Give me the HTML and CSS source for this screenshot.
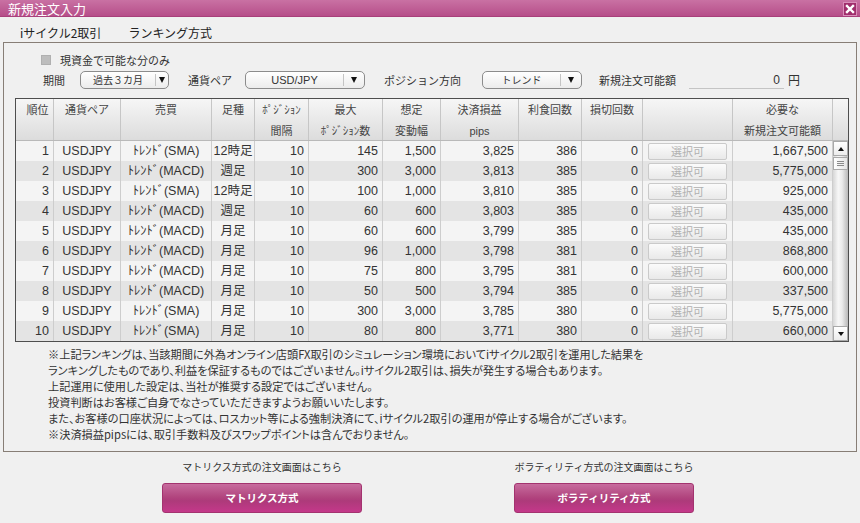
FILE: index.html
```html
<!DOCTYPE html>
<html lang="ja">
<head>
<meta charset="utf-8">
<title>新規注文入力</title>
<link rel="stylesheet" href="styles.css">
</head>
<body>
<div class="titlebar">
  <span class="title">新規注文入力</span>
  <span class="close">
    <svg width="14" height="14" viewBox="0 0 14 14"><rect x="0.5" y="0.5" width="13" height="13" fill="#a02d6c" stroke="#d98fb9"/><path d="M4 4 L10 10 M10 4 L4 10" stroke="#fff" stroke-width="2.4" stroke-linecap="square"/></svg>
  </span>
</div>
<div class="tabs">
  <span class="tab">iサイクル2取引</span>
  <span class="tab">ランキング方式</span>
</div>
<div class="panel">
  <div class="opt-row">
    <span class="checkbox"></span>
    <span class="opt-label">現資金で可能な分のみ</span>
  </div>
  <div class="filter-row">
    <span class="lbl lbl-period">期間</span>
    <div class="dd dd-period"><span class="dd-text">過去３カ月</span><span class="dd-sep"></span><span class="dd-arrow narrow"><i></i></span></div>
    <span class="lbl lbl-pair">通貨ペア</span>
    <div class="dd dd-pair"><span class="dd-text latin">USD/JPY</span><span class="dd-sep"></span><span class="dd-arrow"><i></i></span></div>
    <span class="lbl lbl-dir">ポジション方向</span>
    <div class="dd dd-dir"><span class="dd-text">トレンド</span><span class="dd-sep"></span><span class="dd-arrow"><i></i></span></div>
    <span class="lbl lbl-avail">新規注文可能額</span>
    <span class="field">0</span>
    <span class="yen">円</span>
  </div>
  <div class="grid">
    <div class="head">
      <div class="hc">順位</div>
      <div class="hc">通貨ペア</div>
      <div class="hc">売買</div>
      <div class="hc">足種</div>
      <div class="hc">ﾎﾟｼﾞｼｮﾝ<br>間隔</div>
      <div class="hc">最大<br>ﾎﾟｼﾞｼｮﾝ数</div>
      <div class="hc">想定<br>変動幅</div>
      <div class="hc">決済損益<br><span class="latin">pips</span></div>
      <div class="hc">利食回数</div>
      <div class="hc">損切回数</div>
      <div class="hc"></div>
      <div class="hc">必要な<br>新規注文可能額</div>
      <div class="hc last"></div>
    </div>
    <div class="body">
      <div class="rows">
        <div class="row"><div class="c r">1</div><div class="c m">USDJPY</div><div class="c m">ﾄﾚﾝﾄﾞ(SMA)</div><div class="c m">12時足</div><div class="c r">10</div><div class="c r">145</div><div class="c r">1,500</div><div class="c r">3,825</div><div class="c r">386</div><div class="c r">0</div><div class="c b"><span class="sel">選択可</span></div><div class="c r">1,667,500</div></div>
        <div class="row"><div class="c r">2</div><div class="c m">USDJPY</div><div class="c m">ﾄﾚﾝﾄﾞ(MACD)</div><div class="c m">週足</div><div class="c r">10</div><div class="c r">300</div><div class="c r">3,000</div><div class="c r">3,813</div><div class="c r">385</div><div class="c r">0</div><div class="c b"><span class="sel">選択可</span></div><div class="c r">5,775,000</div></div>
        <div class="row"><div class="c r">3</div><div class="c m">USDJPY</div><div class="c m">ﾄﾚﾝﾄﾞ(SMA)</div><div class="c m">12時足</div><div class="c r">10</div><div class="c r">100</div><div class="c r">1,000</div><div class="c r">3,810</div><div class="c r">385</div><div class="c r">0</div><div class="c b"><span class="sel">選択可</span></div><div class="c r">925,000</div></div>
        <div class="row"><div class="c r">4</div><div class="c m">USDJPY</div><div class="c m">ﾄﾚﾝﾄﾞ(MACD)</div><div class="c m">週足</div><div class="c r">10</div><div class="c r">60</div><div class="c r">600</div><div class="c r">3,803</div><div class="c r">385</div><div class="c r">0</div><div class="c b"><span class="sel">選択可</span></div><div class="c r">435,000</div></div>
        <div class="row"><div class="c r">5</div><div class="c m">USDJPY</div><div class="c m">ﾄﾚﾝﾄﾞ(MACD)</div><div class="c m">月足</div><div class="c r">10</div><div class="c r">60</div><div class="c r">600</div><div class="c r">3,799</div><div class="c r">385</div><div class="c r">0</div><div class="c b"><span class="sel">選択可</span></div><div class="c r">435,000</div></div>
        <div class="row"><div class="c r">6</div><div class="c m">USDJPY</div><div class="c m">ﾄﾚﾝﾄﾞ(MACD)</div><div class="c m">月足</div><div class="c r">10</div><div class="c r">96</div><div class="c r">1,000</div><div class="c r">3,798</div><div class="c r">381</div><div class="c r">0</div><div class="c b"><span class="sel">選択可</span></div><div class="c r">868,800</div></div>
        <div class="row"><div class="c r">7</div><div class="c m">USDJPY</div><div class="c m">ﾄﾚﾝﾄﾞ(MACD)</div><div class="c m">月足</div><div class="c r">10</div><div class="c r">75</div><div class="c r">800</div><div class="c r">3,795</div><div class="c r">381</div><div class="c r">0</div><div class="c b"><span class="sel">選択可</span></div><div class="c r">600,000</div></div>
        <div class="row"><div class="c r">8</div><div class="c m">USDJPY</div><div class="c m">ﾄﾚﾝﾄﾞ(MACD)</div><div class="c m">月足</div><div class="c r">10</div><div class="c r">50</div><div class="c r">500</div><div class="c r">3,794</div><div class="c r">385</div><div class="c r">0</div><div class="c b"><span class="sel">選択可</span></div><div class="c r">337,500</div></div>
        <div class="row"><div class="c r">9</div><div class="c m">USDJPY</div><div class="c m">ﾄﾚﾝﾄﾞ(SMA)</div><div class="c m">月足</div><div class="c r">10</div><div class="c r">300</div><div class="c r">3,000</div><div class="c r">3,785</div><div class="c r">380</div><div class="c r">0</div><div class="c b"><span class="sel">選択可</span></div><div class="c r">5,775,000</div></div>
        <div class="row"><div class="c r">10</div><div class="c m">USDJPY</div><div class="c m">ﾄﾚﾝﾄﾞ(SMA)</div><div class="c m">月足</div><div class="c r">10</div><div class="c r">80</div><div class="c r">800</div><div class="c r">3,771</div><div class="c r">380</div><div class="c r">0</div><div class="c b"><span class="sel">選択可</span></div><div class="c r">660,000</div></div>
      </div>
      <div class="scrollbar">
        <span class="sb-btn"><i class="up"></i></span>
        <span class="sb-thumb"><i></i><i></i><i></i></span>
        <span class="sb-track"></span>
        <span class="sb-btn"><i class="down"></i></span>
      </div>
    </div>
  </div>
  <div class="notes">
    <p>※上記ランキングは、当該期間に外為オンライン店頭FX取引のシミュレーション環境においてiサイクル2取引を運用した結果を</p>
    <p>ランキングしたものであり、利益を保証するものではございません。iサイクル2取引は、損失が発生する場合もあります。</p>
    <p>上記運用に使用した設定は、当社が推奨する設定ではございません。</p>
    <p>投資判断はお客様ご自身でなさっていただきますようお願いいたします。</p>
    <p>また、お客様の口座状況によっては、ロスカット等による強制決済にて、iサイクル2取引の運用が停止する場合がございます。</p>
    <p>※決済損益pipsには、取引手数料及びスワップポイントは含んでおりません。</p>
  </div>
</div>
<div class="bottom">
  <div class="action act-matrix">
    <div class="caption">マトリクス方式の注文画面はこちら</div>
    <div class="pbtn">マトリクス方式</div>
  </div>
  <div class="action act-vol">
    <div class="caption">ボラティリティ方式の注文画面はこちら</div>
    <div class="pbtn">ボラティリティ方式</div>
  </div>
</div>
</body>
</html>
```
FILE: styles.css
```css
* { box-sizing: border-box; }
html, body { margin: 0; padding: 0; }
body {
  width: 860px;
  height: 523px;
  overflow: hidden;
  background: #f0f0f0;
  color: #333;
  font-family: "Noto Sans CJK JP", "Liberation Sans", sans-serif;
  font-size: 11px;
}
.latin { font-family: "Liberation Sans", "Noto Sans CJK JP", sans-serif; }

.titlebar {
  height: 17px;
  background: linear-gradient(#c971a3, #b54c88);
  box-shadow: inset 0 -1px 0 #a8407b;
  display: flex;
  align-items: center;
  justify-content: space-between;
  padding: 0 3px 0 8px;
  color: #fff;
}
.title { font-size: 13px; line-height: 17px; }
.close { display: flex; width: 14px; height: 14px; }

.tabs {
  height: 25px;
  padding: 7px 0 0 20px;
  display: flex;
  gap: 27px;
  font-size: 12px;
  line-height: 17px;
  color: #222;
}

.panel {
  margin: 0 3px;
  height: 410px;
  border: 1px solid #877e76;
}

.opt-row {
  margin-top: 10px;
  height: 14px;
  padding-left: 37px;
  display: flex;
  align-items: center;
}
.checkbox {
  width: 10px;
  height: 10px;
  background: #bdbdbd;
  border: 1px solid #b0b0b0;
  margin-right: 9px;
}
.opt-label { line-height: 14px; }

.filter-row {
  margin-top: 4px;
  height: 18px;
  padding-left: 39px;
  display: flex;
  align-items: center;
}
.lbl { display: block; line-height: 18px; white-space: nowrap; }
.lbl-period { width: 37px; }
.lbl-pair { width: 57px; }
.lbl-dir { width: 98px; }
.lbl-avail { width: 90px; }

.dd {
  height: 18px;
  border: 1px solid #8c8c8c;
  border-radius: 5px;
  background: linear-gradient(#ffffff, #ececec);
  display: flex;
  align-items: center;
  margin-right: 19px;
}
.dd-period { width: 89px; }
.dd-pair { width: 120px; }
.dd-dir { width: 100px; margin-right: 17px; }
.dd-text { flex: 1; text-align: center; font-size: 10px; line-height: 16px; color: #333; }
.dd-text.latin { font-size: 11px; }
.dd-sep { width: 1px; height: 12px; background: #c4c4c4; }
.dd-arrow { width: 20px; display: flex; justify-content: center; align-items: center; }
.dd-arrow.narrow { width: 12px; }
.dd-arrow i {
  display: block;
  width: 0; height: 0;
  border-left: 3.5px solid transparent;
  border-right: 3.5px solid transparent;
  border-top: 6px solid #111;
}
.field {
  width: 95px;
  height: 17px;
  border-bottom: 1px solid #c4c4c4;
  text-align: right;
  padding-right: 4px;
  line-height: 17px;
  font-family: "Liberation Sans", sans-serif;
  font-size: 12px;
}
.yen { margin-left: 4px; font-size: 12px; line-height: 18px; }

/* grid */
.grid {
  margin: 9px 0 0 11px;
  width: 834px;
  border: 1px solid #4e4e4e;
  background: #f4f4f4;
}
.head, .row {
  display: grid;
  grid-template-columns: 38px 67px 91px 43px 54px 74px 58px 78px 63px 61px 90px 100px;
}
.head {
  grid-template-columns: 38px 67px 91px 43px 54px 74px 58px 78px 63px 61px 90px 100px 15px;
  height: 42px;
  background: linear-gradient(#f6f6f6, #dcdcdc);
  border-bottom: 1px solid #b9b9b9;
}
.hc {
  border-right: 1px solid #c6c6c6;
  text-align: center;
  font-size: 11px;
  line-height: 21px;
  color: #444;
  white-space: nowrap;
  overflow: hidden;
}
.hc:first-child { padding-left: 6px; }
.hc.last { border-right: 0; }

.body { display: flex; }
.rows { width: 817px; }
.row {
  height: 20px;
  background: #f4f4f4;
  font-family: "Liberation Sans", "Noto Sans CJK JP", sans-serif;
  font-size: 12.5px;
  color: #333;
}
.row:nth-child(even) { background: #e4e4e4; }
.c {
  border-right: 1px solid #cdcdcd;
  line-height: 20px;
  white-space: nowrap;
  overflow: hidden;
}
.c.r { text-align: right; padding-right: 4px; }
.c.m { text-align: center; }
.c.b { display: flex; align-items: center; padding-left: 5px; }
.sel {
  display: block;
  width: 79px;
  height: 17px;
  border: 1px solid #cacaca;
  border-radius: 2px;
  background: linear-gradient(#fbfbfb, #e9e9e9);
  color: #b0b0b0;
  font-family: "Noto Sans CJK JP", sans-serif;
  font-size: 11px;
  line-height: 15px;
  text-align: center;
}

.scrollbar {
  width: 15px;
  height: 200px;
  display: flex;
  flex-direction: column;
  background: linear-gradient(to right, #d6d6d6, #f7f7f7 35%, #ececec 60%, #b9b9b9);
}
.sb-btn {
  height: 15px;
  border: 1px solid #a9a9a9;
  background: linear-gradient(#ffffff, #ececec);
  display: flex;
  align-items: center;
  justify-content: center;
}
.sb-btn i { display: block; width: 0; height: 0; border-left: 3px solid transparent; border-right: 3px solid transparent; }
.sb-btn i.up { border-bottom: 4px solid #111; }
.sb-btn i.down { border-top: 4px solid #111; }
.sb-thumb {
  height: 13px;
  margin-top: 1px;
  border: 1px solid #a9a9a9;
  background: linear-gradient(to right, #ffffff, #e4e4e4);
  display: flex;
  flex-direction: column;
  justify-content: center;
  align-items: center;
  gap: 1px;
}
.sb-thumb i { display: block; width: 7px; height: 1px; background: #8a8a8a; }
.sb-track { flex: 1; }

.notes {
  margin-top: 4px;
  padding-left: 44px;
  font-size: 11.2px;
  line-height: 16px;
  color: #333;
  font-feature-settings: "palt";
}
.notes p { margin: 0; white-space: nowrap; }

.bottom {
  display: flex;
  padding: 7px 0 0 162px;
  gap: 152px;
}
.action { display: flex; flex-direction: column; align-items: center; }
.act-matrix { width: 200px; }
.act-vol { width: 180px; }
.caption { font-size: 10px; line-height: 16px; color: #333; white-space: nowrap; }
.pbtn {
  margin-top: 8px;
  width: 100%;
  height: 30px;
  border: 1px solid #a3336f;
  border-radius: 3px;
  background: linear-gradient(#c76c9e 0%, #b2467f 45%, #ad3a7a 60%, #c4388a 100%);
  color: #fff;
  font-weight: bold;
  font-size: 10.5px;
  line-height: 28px;
  text-align: center;
}
```
